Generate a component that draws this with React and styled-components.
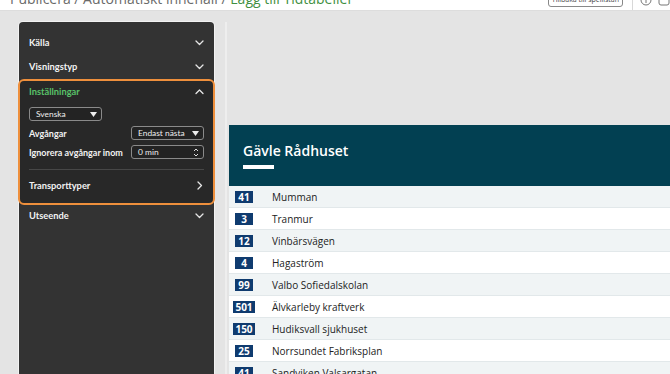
import React from 'react';
import styled, { createGlobalStyle } from 'styled-components';

const GlobalStyle = createGlobalStyle`
  html, body {
    margin: 0;
    padding: 0;
    overflow: hidden;
    background: #e4e4e4;
    font-family: 'Open Sans', 'Liberation Sans', sans-serif;
  }
`;

const TopBar = styled.header`
  height: 11px;
  background: #fff;
  display: flex;
  align-items: flex-end;
  padding-left: 10px;
  overflow: hidden;
  border-bottom: 1px solid #ddd;
  box-sizing: border-box;
`;

const Crumbs = styled.div`
  font-size: 14px;
  line-height: 18px;
  color: #6a6a6a;
  margin-bottom: 2px;
  white-space: nowrap;
  flex: 1;
`;

const Current = styled.span`
  color: #3f8f3f;
`;

const BackButton = styled.div`
  font-size: 7px;
  line-height: 12px;
  color: #444;
  border: 1px solid #888;
  border-radius: 3px;
  padding: 0 3px;
  margin-bottom: 3px;
  white-space: nowrap;
`;

const VSep = styled.div`
  width: 1px;
  align-self: stretch;
  background: #d8d8d8;
  margin: 0 7px 0 9px;
`;

const TopIcon = styled.svg`
  width: 12px;
  height: 12px;
  margin-bottom: 4px;
  margin-right: ${({ gap }) => gap || 0}px;
  flex: none;
`;

const Main = styled.div`
  display: flex;
  padding: 11px 0 0 19px;
`;

const Sidebar = styled.aside`
  width: 195px;
  flex: none;
  height: 400px;
  background: #333;
  border-radius: 4px 4px 0 0;
  padding-top: 8px;
  box-sizing: border-box;
  box-shadow: 0 0 0 1px #f2f2f2;
  font-family: Lato, 'Open Sans', sans-serif;
`;

const Row = styled.div`
  height: ${({ h }) => h || 24}px;
  display: flex;
  align-items: center;
  justify-content: space-between;
  padding: 0 ${({ inset }) => (inset ? 0 : 10)}px;
  font-size: 9.3px;
  font-weight: 700;
  white-space: nowrap;
  color: ${({ active }) => (active ? '#58c168' : '#f2f2f2')};
`;

const Highlight = styled.section`
  margin: 1px -1px 0;
  border: 2px solid #ee8f3c;
  border-radius: 6px;
  background: #282828;
  padding: 0 9px 8px;
`;

const Field = styled.div`
  display: flex;
  align-items: center;
  justify-content: space-between;
  margin-top: ${({ mt }) => mt}px;
  font-size: 9px;
  font-weight: 700;
  white-space: nowrap;
  color: #f2f2f2;
`;

const Control = styled.div`
  flex: none;
  width: 73px;
  height: 14px;
  box-sizing: border-box;
  border: 1px solid #8a8a8a;
  border-radius: 3px;
  background: #232323;
  display: flex;
  align-items: center;
  justify-content: space-between;
  padding: 0 4px 0 6px;
  font-size: 8.4px;
  font-weight: 400;
  color: #eee;
`;

const Divider = styled.div`
  height: 1px;
  background: #474747;
  margin: 10px 0 0;
`;

const Preview = styled.div`
  flex: 1;
  margin-left: 11px;
  padding: 103px 0 0 2px;
  border-left: 2px solid #eeeeee;
  height: 400px;
`;

const Board = styled.div`
  width: 500px;
  background: #fff;
`;

const BoardHead = styled.div`
  height: 61px;
  background: #024052;
  padding: 16px 0 0 14px;
  box-sizing: border-box;
`;

const Title = styled.h1`
  margin: 0;
  font-size: 14px;
  line-height: 20px;
  font-weight: 600;
  color: #fff;
`;

const Underline = styled.div`
  width: 31px;
  height: 4px;
  background: #fff;
  margin-top: 4px;
`;

const Departure = styled.div`
  height: 22px;
  box-sizing: border-box;
  display: flex;
  align-items: center;
  background: ${({ shade }) => (shade ? '#f0f4f5' : '#fff')};
  border-bottom: 1px solid #e2e8ea;
`;

const BadgeCell = styled.div`
  width: 30px;
  display: flex;
  justify-content: center;
  margin-right: 13px;
`;

const Badge = styled.span`
  min-width: 18px;
  height: 12px;
  padding: 0 2px;
  box-sizing: border-box;
  background: #0f3b6f;
  color: #fff;
  font-size: 10px;
  font-weight: 700;
  line-height: 12px;
  text-align: center;
`;

const Stop = styled.span`
  font-size: 10px;
  color: #222;
`;

const Chevron = ({ dir = 'down' }) => {
  const pts = {
    down: '1,3 4.5,6.5 8,3',
    up: '1,6.5 4.5,3 8,6.5',
    right: '3,1 6.5,4.5 3,8',
  }[dir];
  return (
    <svg width="9" height="9" viewBox="0 0 9 9">
      <polyline points={pts} fill="none" stroke="#e6e6e6" strokeWidth="1.3" strokeLinecap="round" strokeLinejoin="round" />
    </svg>
  );
};

const Caret = () => (
  <svg width="7" height="5" viewBox="0 0 7 5">
    <polygon points="0,0 7,0 3.5,5" fill="#eee" />
  </svg>
);

const Spinner = () => (
  <svg width="6" height="9" viewBox="0 0 6 9">
    <polyline points="1,3 3,1 5,3" fill="none" stroke="#ddd" strokeWidth="1" />
    <polyline points="1,6 3,8 5,6" fill="none" stroke="#ddd" strokeWidth="1" />
  </svg>
);

const departures = [
  ['41', 'Mumman'],
  ['3', 'Tranmur'],
  ['12', 'Vinbärsvägen'],
  ['4', 'Hagaström'],
  ['99', 'Valbo Sofiedalskolan'],
  ['501', 'Älvkarleby kraftverk'],
  ['150', 'Hudiksvall sjukhuset'],
  ['25', 'Norrsundet Fabriksplan'],
  ['41', 'Sandviken Valsargatan'],
];

export default function App() {
  return (
    <>
      <GlobalStyle />
      <TopBar>
        <Crumbs>
          Publicera / Automatiskt innehåll / <Current>Lägg till Tidtabeller</Current>
        </Crumbs>
        <BackButton>Tillbaka till spellistan</BackButton>
        <VSep />
        <TopIcon viewBox="0 0 12 12" gap={6}>
          <circle cx="6" cy="6" r="5" fill="none" stroke="#777" strokeWidth="1" />
          <line x1="6" y1="5" x2="6" y2="9" stroke="#777" strokeWidth="1" />
          <circle cx="6" cy="3.3" r="0.7" fill="#777" />
        </TopIcon>
        <TopIcon viewBox="0 0 12 12">
          <rect x="1" y="1" width="10" height="10" rx="2" fill="none" stroke="#777" strokeWidth="1" />
        </TopIcon>
      </TopBar>
      <Main>
        <Sidebar>
          <Row>
            Källa <Chevron />
          </Row>
          <Row>
            Visningstyp <Chevron />
          </Row>
          <Highlight>
            <Row h={20} inset active>
              Inställningar <Chevron dir="up" />
            </Row>
            <Field mt={6}>
              <Control>
                Svenska <Caret />
              </Control>
            </Field>
            <Field mt={5}>
              Avgångar
              <Control>
                Endast nästa <Caret />
              </Control>
            </Field>
            <Field mt={5}>
              Ignorera avgångar inom
              <Control>
                0 min <Spinner />
              </Control>
            </Field>
            <Divider />
            <Row h={20} inset style={{ marginTop: 5 }}>
              Transporttyper <Chevron dir="right" />
            </Row>
          </Highlight>
          <Row h={20}>
            Utseende <Chevron />
          </Row>
        </Sidebar>
        <Preview>
          <Board>
            <BoardHead>
              <Title>Gävle Rådhuset</Title>
              <Underline />
            </BoardHead>
            {departures.map(([line, stop], i) => (
              <Departure key={i} shade={i % 2 === 0}>
                <BadgeCell>
                  <Badge>{line}</Badge>
                </BadgeCell>
                <Stop>{stop}</Stop>
              </Departure>
            ))}
          </Board>
        </Preview>
      </Main>
    </>
  );
}
